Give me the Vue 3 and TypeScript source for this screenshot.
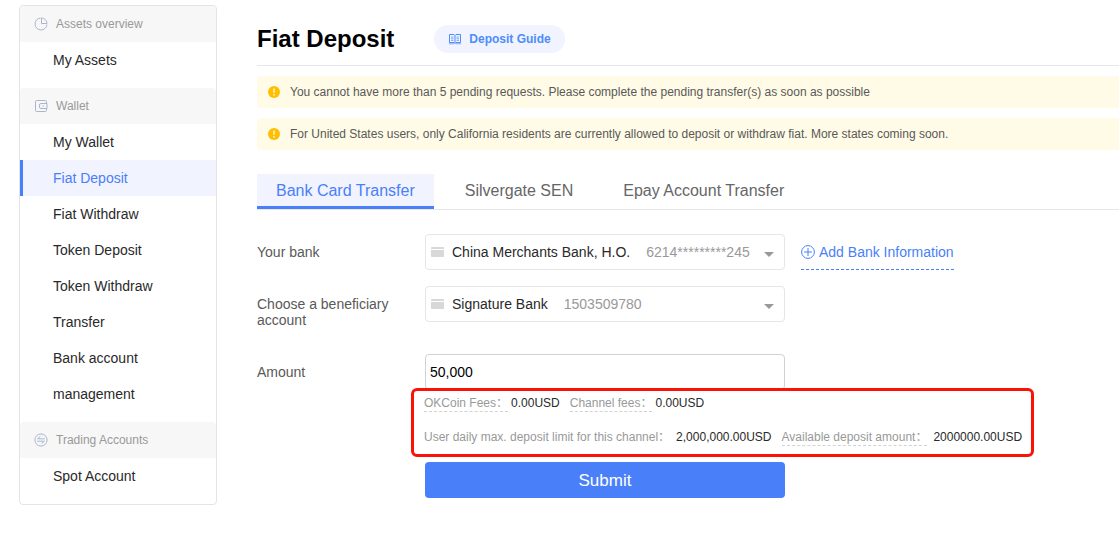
<script setup lang="ts">
import { computed, ref } from 'vue'

type IconName = 'pie' | 'wallet' | 'swap'

interface MenuSection {
  title: string
  icon: IconName
  items: string[]
}

interface BankAccount {
  name: string
  number: string
}

const sections: MenuSection[] = [
  { title: 'Assets overview', icon: 'pie', items: ['My Assets'] },
  {
    title: 'Wallet',
    icon: 'wallet',
    items: [
      'My Wallet',
      'Fiat Deposit',
      'Fiat Withdraw',
      'Token Deposit',
      'Token Withdraw',
      'Transfer',
      'Bank account management',
    ],
  },
  { title: 'Trading Accounts', icon: 'swap', items: ['Spot Account'] },
]

const notices: string[] = [
  'You cannot have more than 5 pending requests. Please complete the pending transfer(s) as soon as possible',
  'For United States users, only California residents are currently allowed to deposit or withdraw fiat. More states coming soon.',
]

const tabs: string[] = ['Bank Card Transfer', 'Silvergate SEN', 'Epay Account Transfer']

const userBanks: BankAccount[] = [{ name: 'China Merchants Bank, H.O.', number: '6214*********245' }]
const beneficiaries: BankAccount[] = [{ name: 'Signature Bank', number: '1503509780' }]

const activeItem = ref('Fiat Deposit')
const activeTab = ref(0)
const bankIndex = ref(0)
const beneficiaryIndex = ref(0)
const amount = ref('50,000')

const bank = computed(() => userBanks[bankIndex.value])
const beneficiary = computed(() => beneficiaries[beneficiaryIndex.value])
</script>

<template>
  <div class="page">
    <nav class="sidebar" aria-label="Assets">
      <section v-for="section in sections" :key="section.title" class="group">
        <h2 class="group-title">
          <svg class="group-icon" viewBox="0 0 14 14" aria-hidden="true">
            <g v-if="section.icon === 'pie'">
              <path d="M6.5 1A6 6 0 1 0 13 7.5" />
              <path d="M7.5 1v5.5H13A5.6 5.6 0 0 0 7.5 1z" />
            </g>
            <g v-else-if="section.icon === 'wallet'">
              <path d="M12.5 4.5V2.7a1.2 1.2 0 0 0-1.2-1.2H2.7a1.2 1.2 0 0 0-1.2 1.2v8.6a1.2 1.2 0 0 0 1.2 1.2h8.6a1.2 1.2 0 0 0 1.2-1.2V9.5" />
              <path d="M7 4.5h6v5H7A1.5 1.5 0 0 1 5.5 8V6A1.5 1.5 0 0 1 7 4.5z" />
              <path d="M8.3 7h1.8" />
            </g>
            <g v-else>
              <circle cx="7" cy="7" r="6.1" />
              <path d="M10.8 5.8H3.6L6.3 3.4M3.2 8.2h7.2L7.7 10.6" />
            </g>
          </svg>
          {{ section.title }}
        </h2>
        <a
          v-for="item in section.items"
          :key="item"
          href="#"
          class="item"
          :class="{ active: item === activeItem }"
          @click.prevent="activeItem = item"
          >{{ item }}</a
        >
      </section>
    </nav>

    <main class="main">
      <header class="header">
        <h1 class="title">Fiat Deposit</h1>
        <a href="#" class="guide">
          <svg class="guide-icon" viewBox="0 0 14 12" aria-hidden="true">
            <path d="M7 2.5L6 1.5H1.5v8H6l1 1 1-1h4.5v-8H8L7 2.5v8" />
            <path class="thin" d="M3 4h2.5M3 5.7h2.5M3 7.4h2.5M8.5 4H11M8.5 5.7H11M8.5 7.4H11M1 10.8h5M8 10.8h5" />
          </svg>
          Deposit Guide
        </a>
      </header>

      <p v-for="notice in notices" :key="notice" class="notice">
        <svg class="notice-icon" viewBox="0 0 12 12" aria-hidden="true">
          <circle cx="6" cy="6" r="6" fill="#ffbf00" />
          <path d="M6 2.6v4.2M6 8.1v1.3" stroke="#fff" stroke-width="1.3" />
        </svg>
        {{ notice }}
      </p>

      <div class="tabs" role="tablist">
        <button
          v-for="(tab, index) in tabs"
          :key="tab"
          type="button"
          role="tab"
          class="tab"
          :class="{ active: index === activeTab }"
          :aria-selected="index === activeTab"
          @click="activeTab = index"
        >
          {{ tab }}
        </button>
      </div>

      <form class="form" @submit.prevent>
        <div class="row">
          <label class="label" for="bank">Your bank</label>
          <div class="picker">
            <svg class="card-icon" viewBox="0 0 13 10" aria-hidden="true">
              <path d="M1 0h11a1 1 0 0 1 1 1v1H0V1a1 1 0 0 1 1-1zM0 3h13v6a1 1 0 0 1-1 1H1a1 1 0 0 1-1-1z" />
            </svg>
            <span class="bank-name">{{ bank.name }}</span>
            <span class="bank-number">{{ bank.number }}</span>
            <span class="caret"></span>
            <select id="bank" v-model="bankIndex" class="native">
              <option v-for="(entry, index) in userBanks" :key="entry.number" :value="index">{{ entry.name }}</option>
            </select>
          </div>
          <a href="#" class="add">
            <svg class="add-icon" viewBox="0 0 14 14" aria-hidden="true">
              <circle cx="7" cy="7" r="6.4" />
              <path d="M7 3v8M3 7h8" />
            </svg>
            Add Bank Information
          </a>
        </div>

        <div class="row">
          <label class="label" for="beneficiary">Choose a beneficiary account</label>
          <div class="picker">
            <svg class="card-icon" viewBox="0 0 13 10" aria-hidden="true">
              <path d="M1 0h11a1 1 0 0 1 1 1v1H0V1a1 1 0 0 1 1-1zM0 3h13v6a1 1 0 0 1-1 1H1a1 1 0 0 1-1-1z" />
            </svg>
            <span class="bank-name">{{ beneficiary.name }}</span>
            <span class="bank-number">{{ beneficiary.number }}</span>
            <span class="caret"></span>
            <select id="beneficiary" v-model="beneficiaryIndex" class="native">
              <option v-for="(entry, index) in beneficiaries" :key="entry.number" :value="index">{{ entry.name }}</option>
            </select>
          </div>
        </div>

        <div class="row amount-row">
          <label class="label" for="amount">Amount</label>
          <input id="amount" v-model="amount" class="amount" type="text" inputmode="decimal" />
        </div>

        <div class="fees">
          <div class="fee-line">
            <span class="fee-name dashed">OKCoin Fees：</span><span class="fee-value">0.00USD</span>
            <span class="fee-name dashed">Channel fees：</span><span class="fee-value">0.00USD</span>
          </div>
          <div class="fee-line limits">
            <span class="fee-name">User daily max. deposit limit for this channel：</span><span class="fee-value">2,000,000.00USD</span>
            <span class="fee-name dashed">Available deposit amount：</span><span class="fee-value">2000000.00USD</span>
          </div>
        </div>

        <button type="submit" class="submit">Submit</button>
      </form>
    </main>
  </div>
</template>

<style>
body {
  margin: 0;
  background: #fff;
}
</style>

<style scoped>
.page {
  display: flex;
  align-items: flex-start;
  gap: 40px;
  padding: 5px 0 32px 19px;
  font-family: 'Liberation Sans', 'Noto Sans CJK SC', sans-serif;
  font-size: 14px;
  color: #292929;
}

.page *,
.page {
  box-sizing: border-box;
}

a {
  text-decoration: none;
}

.sidebar {
  flex: 0 0 198px;
  border: 1px solid #e4e4e4;
  border-radius: 4px;
  overflow: hidden;
}

.group {
  padding-bottom: 10px;
}

.group-title {
  display: flex;
  align-items: center;
  gap: 8px;
  margin: 0;
  padding: 0 14px;
  height: 36px;
  border-radius: 4px 4px 0 0;
  background: #f7f7f7;
  color: #999;
  font-size: 12px;
  font-weight: 400;
}

.group-icon {
  width: 14px;
  height: 14px;
  fill: none;
  stroke: #a9b6cb;
  stroke-width: 1;
}

.item {
  display: block;
  padding: 0 28px 0 30px;
  border-left: 3px solid transparent;
  color: #292929;
  line-height: 36px;
}

.item.active {
  border-left-color: #4a7ffa;
  background: #f1f3ff;
  color: #4a7ffa;
}

.main {
  flex: 1;
  min-width: 0;
}

.header {
  display: flex;
  align-items: center;
  gap: 40px;
  height: 61px;
  margin-bottom: 10px;
  padding-top: 8px;
  border-bottom: 1px solid #e6e6e6;
}

.title {
  margin: 0;
  color: #000;
  font-size: 24px;
  line-height: 30px;
}

.guide {
  display: flex;
  align-items: center;
  gap: 7px;
  height: 28px;
  padding: 0 14px;
  border-radius: 14px;
  background: #f1f3ff;
  color: #4d8df9;
  font-size: 12px;
  font-weight: 700;
}

.guide-icon {
  width: 14px;
  height: 12px;
  fill: none;
  stroke: #4d8df9;
  stroke-width: 1;
}

.guide-icon .thin {
  stroke-width: 0.7;
}

.notice {
  display: flex;
  align-items: center;
  gap: 10px;
  height: 32px;
  margin: 0 0 10px;
  padding: 0 11px;
  border-radius: 4px 0 0 4px;
  background: #fffbe6;
  color: #595959;
  font-size: 12px;
}

.notice-icon {
  flex: none;
  width: 12px;
  height: 12px;
}

.tabs {
  display: flex;
  gap: 12px;
  margin-top: 24px;
  border-bottom: 1px solid #e6e6e6;
}

.tab {
  height: 35px;
  padding: 1px 19px 0;
  border: 0;
  border-bottom: 3px solid transparent;
  background: none;
  color: #666;
  font: inherit;
  font-size: 16px;
}

.tab.active {
  border-bottom-color: #4a7ffa;
  background: #f1f3ff;
  color: #4a7ffa;
}

.form {
  padding-top: 24px;
}

.row {
  display: flex;
  align-items: flex-start;
  margin-bottom: 16px;
}

.row + .amount-row {
  margin-top: 26px;
  margin-bottom: 0;
}

.label {
  flex: 0 0 168px;
  padding: 10px 24px 0 0;
  color: #595959;
  line-height: 16px;
}

.picker {
  position: relative;
  display: flex;
  align-items: center;
  flex: 0 1 360px;
  height: 36px;
  padding: 0 10px 0 5px;
  border: 1px solid #e6e6e6;
  border-radius: 4px;
  white-space: nowrap;
}

.card-icon {
  flex: none;
  width: 13px;
  height: 10px;
  margin-right: 8px;
  fill: #d8d8d8;
}

.bank-number {
  margin-left: 16px;
  color: #999;
}

.caret {
  margin: 4px 0 0 auto;
  border: 5px solid transparent;
  border-top-color: #999;
  border-bottom: 0;
}

.native {
  position: absolute;
  inset: 0;
  width: 100%;
  height: 100%;
  opacity: 0;
  cursor: pointer;
}

.add {
  display: flex;
  align-items: center;
  gap: 4px;
  height: 36px;
  margin-left: 16px;
  border-bottom: 1px dashed #4a7ffa;
  color: #4a7ffa;
  white-space: nowrap;
}

.add-icon {
  width: 14px;
  height: 14px;
  fill: none;
  stroke: #4a7ffa;
  stroke-width: 1;
}

.amount {
  flex: 0 1 360px;
  min-width: 0;
  height: 36px;
  padding: 0 4px;
  border: 1px solid #d2d2d2;
  border-radius: 4px;
  background: #fff;
  color: #000;
  font: inherit;
}

.fees {
  position: relative;
  display: flex;
  flex-direction: column;
  gap: 18px;
  width: fit-content;
  margin: -2px 0 5px 154px;
  padding: 5px 9px 8px 10px;
  border: 3px solid #fb1207;
  border-radius: 6px;
  background: #fff;
  font-size: 12px;
  line-height: 15px;
  white-space: nowrap;
}

.fee-line {
  display: flex;
  height: 16px;
}

.fee-name {
  color: #999;
}

.fee-name.dashed {
  border-bottom: 1px dashed #d2d2d2;
}

.fee-value {
  margin: 0 10px 0 3px;
}

.limits .fee-value {
  margin-left: 6px;
}

.fee-value:last-child {
  margin-right: 0;
}

.submit {
  display: block;
  width: 360px;
  height: 36px;
  margin-left: 168px;
  padding: 2px 0 0;
  border: 0;
  border-radius: 4px;
  background: #4a7ffa;
  color: #fff;
  font: inherit;
  font-size: 17px;
}
</style>
